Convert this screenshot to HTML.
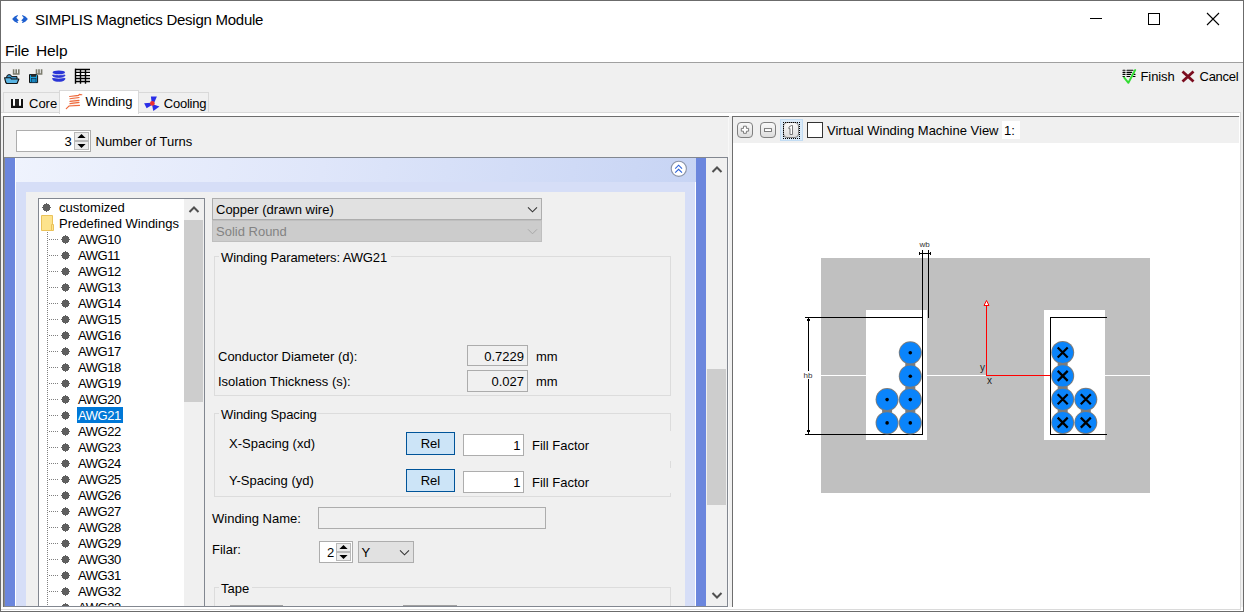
<!DOCTYPE html>
<html><head><meta charset="utf-8"><style>
html,body{margin:0;padding:0;}
body{width:1244px;height:612px;position:relative;overflow:hidden;background:#f0f0f0;font-family:"Liberation Sans",sans-serif;}
body>div,body>svg{position:absolute;}
.t{white-space:nowrap;}
</style></head><body>
<div style="left:0px;top:0px;width:1244px;height:62px;background:#fff"></div>
<div style="left:0px;top:62px;width:1244px;height:1px;background:#a0a0a0"></div>
<svg style="left:0px;top:0px" width="40" height="40" viewBox="0 0 40 40">
<path d="M17.6 15.1 L14.6 16.4 L12.1 18.9 L14.4 21.4 L17.3 22.9 L18.2 22.4 L17.1 21.3 L18.8 20.6 L16.3 17.7 L17.9 15.7 Z" fill="#1f60d0"/>
<path d="M22.4 15.1 L25.4 16.4 L27.9 18.9 L25.6 21.4 L22.7 22.9 L21.8 22.4 L22.9 21.3 L21.2 20.6 L23.7 17.7 L22.1 15.7 Z" fill="#1f60d0"/>
</svg>
<div class="t" style="left:35px;top:12.00px;font-size:15px;line-height:15px;color:#000;letter-spacing:-0.25px">SIMPLIS Magnetics Design Module</div>
<div style="left:1090px;top:18px;width:12px;height:1px;background:#000"></div>
<div style="left:1148px;top:13px;width:12px;height:12px;border:1px solid #000;box-sizing:border-box"></div>
<svg style="left:1206px;top:12px" width="14" height="14" viewBox="0 0 14 14"><path d="M1 1 L13 13 M13 1 L1 13" stroke="#000" stroke-width="1.1"/></svg>
<div class="t" style="left:5px;top:42.68px;font-size:15.5px;line-height:15.5px;color:#000;letter-spacing:-0.2px">File</div>
<div class="t" style="left:36px;top:42.68px;font-size:15.5px;line-height:15.5px;color:#000;letter-spacing:-0.1px">Help</div>
<svg style="left:0px;top:64px" width="48" height="24" viewBox="0 0 48 24">
<path d="M13.6 5.2 V10 H18.8 V5.2 M16.2 5.2 V10" fill="none" stroke="#7c7c6e" stroke-width="1.6"/>
<path d="M6.5 14 Q6.5 10.6 9 10.6 Q11.5 10.6 11.5 12.6 H17 V15.5 H6.5 Z" fill="#3d9ad0" stroke="#111" stroke-width="1"/>
<path d="M4.6 13.8 H10.6 L11.4 15 H18.9 L17.3 19 L16.8 19.5 H6.8 L5.8 18.5 Z" fill="#5ab4e2" stroke="#111" stroke-width="1.1" stroke-linejoin="round"/>
<path d="M36.5 5.2 V10 H41.6 V5.2 M39 5.2 V10" fill="none" stroke="#7c7c6e" stroke-width="1.6"/>
<path d="M29.5 10.6 H36.5 L37.6 11.7 V18.6 H29.5 Z" fill="#1da1dc" stroke="#111" stroke-width="1"/>
<rect x="31" y="10.6" width="5" height="2.2" fill="#2a2a2a"/>
<rect x="31.5" y="14.5" width="4.5" height="4" fill="#1a86c0" stroke="#0f3550" stroke-width="0.7"/>
</svg>
<svg style="left:48px;top:64px" width="20" height="24" viewBox="0 0 20 24">
<ellipse cx="10.8" cy="8.4" rx="6.2" ry="1.9" fill="#2a35d6"/>
<path d="M4.6 11 Q4.6 13.4 10.8 13.4 Q17 13.4 17 11 Q10.8 12.4 4.6 11 Z" fill="#2a35d6" stroke="#2a35d6" stroke-width="0.8"/>
<path d="M4.6 14.4 Q4.6 17.3 10.8 17.3 Q17 17.3 17 14.4 Q10.8 15.8 4.6 14.4 Z" fill="#2a35d6" stroke="#2a35d6" stroke-width="0.9"/>
</svg>
<svg style="left:74px;top:68px" width="17" height="17" viewBox="0 0 17 17">
<rect x="1.5" y="1.5" width="14.5" height="12" fill="#fff"/>
<path d="M1.5 0.7 V15.8 M6.5 1 V15.8 M11.5 1 V15.8" stroke="#000" stroke-width="1.4"/>
<path d="M1 1.5 H16 M1 4.4 H16 M1 7.6 H16 M1 10.5 H16 M1 13.5 H16" stroke="#000" stroke-width="1.4"/>
</svg>
<svg style="left:1118px;top:64px" width="24" height="24" viewBox="1118 64 24 24">
<path d="M1123 70.3 H1125 M1127 70.3 H1133 M1123 72.4 H1125 M1127 72.4 H1131.7 M1123 74.4 H1125 M1127 74.4 H1130.8 M1133.6 74.4 H1135 M1123 76.5 H1124.5 M1127 76.5 H1129.7 M1133 76.5 H1135" stroke="#000" stroke-width="1.1" stroke-linecap="round"/>
<path d="M1124.2 77.6 L1128.4 82.8 L1135.2 70" fill="none" stroke="#33dd33" stroke-width="1.9" stroke-linecap="round" stroke-linejoin="round"/>
</svg>
<div class="t" style="left:1140.5px;top:70.20px;font-size:13px;line-height:13px;color:#000;letter-spacing:-0.1px">Finish</div>
<svg style="left:1181px;top:70px" width="14" height="13" viewBox="0 0 14 13"><path d="M1.5 1.5 L12.5 11.5 M12.5 1.5 L1.5 11.5" stroke="#7b0c1f" stroke-width="2.8"/></svg>
<div class="t" style="left:1199.5px;top:70.20px;font-size:13px;line-height:13px;color:#000;letter-spacing:-0.25px">Cancel</div>
<div style="left:1px;top:112px;width:1240px;height:1px;background:#dadada"></div>
<div style="left:1px;top:113px;width:1240px;height:3px;background:#fff"></div>
<div style="left:3px;top:92px;width:57px;height:21px;background:#f0f0f0;border:1px solid #d9d9d9;box-sizing:border-box"></div>
<div style="left:138px;top:92px;width:71px;height:21px;background:#f0f0f0;border:1px solid #d9d9d9;box-sizing:border-box"></div>
<div style="left:59px;top:90px;width:80px;height:24px;background:#fff;border:1px solid #d9d9d9;border-bottom:none;box-sizing:border-box"></div>
<svg style="left:0px;top:92px" width="60" height="20" viewBox="0 92 60 20"><rect x="11" y="99" width="12" height="9" fill="#111"/><rect x="15" y="99" width="4" height="7" fill="#222"/><rect x="13" y="99" width="2" height="6.8" fill="#fff"/><rect x="19" y="99" width="2" height="6.8" fill="#fff"/></svg>
<div class="t" style="left:29px;top:97.00px;font-size:13px;line-height:13px;color:#000;">Core</div>
<svg style="left:60px;top:90px" width="26" height="22" viewBox="60 90 26 22" fill="none" stroke="#ee6a3c" stroke-width="1.15" stroke-linecap="round">
<path d="M66.3 108.6 L69 106 L79.5 105.4 M70 103.6 L79 102.4 M70 101.4 L79 100.4 M70 98.7 L79 97.5 M69.6 96.5 L78.5 95.4 L79.4 94.4 L81.8 94.7"/>
<path d="M69 106 L79 103 M70 103.6 L79 100.5 M70 101.4 L79 97.7 M70 98.7 L78.5 95.6" stroke-width="0.5" opacity="0.3"/>
</svg>
<div class="t" style="left:85.6px;top:94.90px;font-size:13px;line-height:13px;color:#000;">Winding</div>
<svg style="left:140px;top:92px" width="24" height="22" viewBox="140 92 24 22">
<path d="M151.6 102.2 L150.9 96.6 L156.9 96.4 L154.3 102.6 Z" fill="#2a2ee8"/>
<path d="M151 102.8 L144.1 103.3 L146.6 108.3 L151.5 105.2 Z" fill="#2a2ee8"/>
<path d="M153.6 104.4 L159.5 106.5 L153.3 110.9 L152.2 105.4 Z" fill="#2a2ee8"/>
<circle cx="152.3" cy="103.4" r="2.4" fill="#ec2f33"/>
</svg>
<div class="t" style="left:163.8px;top:97.20px;font-size:13px;line-height:13px;color:#000;letter-spacing:-0.25px">Cooling</div>
<div style="left:3px;top:116px;width:726px;height:1px;background:#6e6e6e"></div>
<div style="left:3px;top:116px;width:1px;height:491px;background:#6e6e6e"></div>
<div style="left:728px;top:117px;width:1px;height:490px;background:#f8f8f8"></div>
<div style="left:4px;top:607px;width:726px;height:1px;background:#fff"></div>
<div style="left:16px;top:130px;width:75px;height:22px;background:#fff;border:1px solid #adadad;box-sizing:border-box"></div>
<div style="left:74px;top:132px;width:15px;height:9px;background:#ececec;border:1px solid #b9b9b9;box-sizing:border-box"></div>
<div style="left:74px;top:141px;width:15px;height:9px;background:#ececec;border:1px solid #b9b9b9;box-sizing:border-box"></div>
<svg style="left:76px;top:133px" width="11" height="16" viewBox="0 0 11 16"><path d="M5.5 0.9 L9.6 5.1 H1.4 Z M1.4 10.9 H9.6 L5.5 15 Z" fill="#000"/></svg>
<div class="t" style="left:64.5px;top:134.70px;font-size:13px;line-height:13px;color:#000;">3</div>
<div class="t" style="left:95.5px;top:134.70px;font-size:13px;line-height:13px;color:#000;">Number of Turns</div>
<div style="left:4px;top:157px;width:724px;height:1px;background:#828790"></div>
<div style="left:727px;top:157px;width:1px;height:450px;background:#828790"></div>
<div style="left:4px;top:606px;width:724px;height:1px;background:#828790"></div>
<div style="left:4px;top:158px;width:1px;height:448px;background:#8a8a8a"></div>
<div style="left:5px;top:158px;width:10px;height:448px;background:#6b86dd"></div>
<div style="left:696px;top:158px;width:10px;height:448px;background:#6b86dd"></div>
<div style="left:16px;top:158px;width:680px;height:24px;background:linear-gradient(100deg,#eff3fd 0%,#dfe6fa 45%,#c7d4f4 100%)"></div>
<div style="left:15px;top:158px;width:1px;height:448px;background:#fff"></div>
<div style="left:695px;top:182px;width:1px;height:424px;background:#fff"></div>
<div style="left:16px;top:182px;width:679px;height:424px;background:#d6def7"></div>
<div style="left:26px;top:192px;width:659px;height:414px;background:#f0f0f0"></div>
<svg style="left:670px;top:160px" width="18" height="18" viewBox="0 0 18 18"><circle cx="8.8" cy="8.8" r="7.6" fill="#fff" stroke="#8a93a6" stroke-width="1.1"/><path d="M5.2 8.6 L8.6 5.2 L12 8.6 M5.2 12.7 L8.6 9.3 L12 12.7" fill="none" stroke="#2d62d8" stroke-width="1.1"/></svg>
<div style="left:706px;top:158px;width:21px;height:448px;background:#f0f0f0"></div>
<div style="left:707px;top:369px;width:19px;height:136px;background:#cdcdcd"></div>
<svg style="left:710.5px;top:165px" width="12" height="9" viewBox="0 0 12 9"><path d="M1.5 7 L6 2.5 L10.5 7" fill="none" stroke="#505050" stroke-width="2"/></svg>
<svg style="left:710.5px;top:591px" width="12" height="9" viewBox="0 0 12 9"><path d="M1.5 2 L6 6.5 L10.5 2" fill="none" stroke="#505050" stroke-width="2"/></svg>
<div style="left:38px;top:198px;width:167px;height:408px;background:#fff;border:1px solid #828790;border-bottom:none;box-sizing:border-box"></div>
<div style="left:184px;top:199px;width:20px;height:407px;background:#f0f0f0"></div>
<div style="left:184px;top:220px;width:19px;height:182px;background:#cdcdcd"></div>
<svg style="left:188px;top:205px" width="12" height="9" viewBox="0 0 12 9"><path d="M1.5 7 L6 2.5 L10.5 7" fill="none" stroke="#505050" stroke-width="2"/></svg>
<svg style="left:42px;top:203px" width="9" height="9" viewBox="0 0 9 9" shape-rendering="crispEdges" fill="#5f5f5f"><rect x="1" y="2" width="7" height="5"/><rect x="2" y="1" width="5" height="7"/><rect x="4" y="0" width="1" height="9"/><rect x="0" y="4" width="9" height="1"/></svg>
<div class="t" style="left:59px;top:200.50px;font-size:13px;line-height:13px;color:#000;">customized</div>
<svg style="left:41px;top:215px" width="14" height="17" viewBox="0 0 14 17"><path d="M0.5 0.5 H11.5 V9.5 H12.5 V15.5 H0.5 Z" fill="#fde38c" stroke="#eac25a" stroke-width="1"/><path d="M10.5 9.5 H12 M10.5 9.5 V15.5" stroke="#eac25a" stroke-width="1" fill="none"/></svg>
<div class="t" style="left:59px;top:216.50px;font-size:13px;line-height:13px;color:#000;">Predefined Windings</div>
<div style="left:47px;top:232px;width:1px;height:374px;background:repeating-linear-gradient(to bottom,#808080 0 1px,transparent 1px 2px)"></div>
<div style="left:49px;top:239px;width:10px;height:1px;background:repeating-linear-gradient(to right,#808080 0 1px,transparent 1px 2px)"></div>
<svg style="left:61px;top:235px" width="9" height="9" viewBox="0 0 9 9" shape-rendering="crispEdges" fill="#5f5f5f"><rect x="1" y="2" width="7" height="5"/><rect x="2" y="1" width="5" height="7"/><rect x="4" y="0" width="1" height="9"/><rect x="0" y="4" width="9" height="1"/></svg>
<div class="t" style="left:78px;top:232.50px;font-size:13px;line-height:13px;color:#000;letter-spacing:-0.45px">AWG10</div>
<div style="left:49px;top:255px;width:10px;height:1px;background:repeating-linear-gradient(to right,#808080 0 1px,transparent 1px 2px)"></div>
<svg style="left:61px;top:251px" width="9" height="9" viewBox="0 0 9 9" shape-rendering="crispEdges" fill="#5f5f5f"><rect x="1" y="2" width="7" height="5"/><rect x="2" y="1" width="5" height="7"/><rect x="4" y="0" width="1" height="9"/><rect x="0" y="4" width="9" height="1"/></svg>
<div class="t" style="left:78px;top:248.50px;font-size:13px;line-height:13px;color:#000;letter-spacing:-0.45px">AWG11</div>
<div style="left:49px;top:271px;width:10px;height:1px;background:repeating-linear-gradient(to right,#808080 0 1px,transparent 1px 2px)"></div>
<svg style="left:61px;top:267px" width="9" height="9" viewBox="0 0 9 9" shape-rendering="crispEdges" fill="#5f5f5f"><rect x="1" y="2" width="7" height="5"/><rect x="2" y="1" width="5" height="7"/><rect x="4" y="0" width="1" height="9"/><rect x="0" y="4" width="9" height="1"/></svg>
<div class="t" style="left:78px;top:264.50px;font-size:13px;line-height:13px;color:#000;letter-spacing:-0.45px">AWG12</div>
<div style="left:49px;top:287px;width:10px;height:1px;background:repeating-linear-gradient(to right,#808080 0 1px,transparent 1px 2px)"></div>
<svg style="left:61px;top:283px" width="9" height="9" viewBox="0 0 9 9" shape-rendering="crispEdges" fill="#5f5f5f"><rect x="1" y="2" width="7" height="5"/><rect x="2" y="1" width="5" height="7"/><rect x="4" y="0" width="1" height="9"/><rect x="0" y="4" width="9" height="1"/></svg>
<div class="t" style="left:78px;top:280.50px;font-size:13px;line-height:13px;color:#000;letter-spacing:-0.45px">AWG13</div>
<div style="left:49px;top:303px;width:10px;height:1px;background:repeating-linear-gradient(to right,#808080 0 1px,transparent 1px 2px)"></div>
<svg style="left:61px;top:299px" width="9" height="9" viewBox="0 0 9 9" shape-rendering="crispEdges" fill="#5f5f5f"><rect x="1" y="2" width="7" height="5"/><rect x="2" y="1" width="5" height="7"/><rect x="4" y="0" width="1" height="9"/><rect x="0" y="4" width="9" height="1"/></svg>
<div class="t" style="left:78px;top:296.50px;font-size:13px;line-height:13px;color:#000;letter-spacing:-0.45px">AWG14</div>
<div style="left:49px;top:319px;width:10px;height:1px;background:repeating-linear-gradient(to right,#808080 0 1px,transparent 1px 2px)"></div>
<svg style="left:61px;top:315px" width="9" height="9" viewBox="0 0 9 9" shape-rendering="crispEdges" fill="#5f5f5f"><rect x="1" y="2" width="7" height="5"/><rect x="2" y="1" width="5" height="7"/><rect x="4" y="0" width="1" height="9"/><rect x="0" y="4" width="9" height="1"/></svg>
<div class="t" style="left:78px;top:312.50px;font-size:13px;line-height:13px;color:#000;letter-spacing:-0.45px">AWG15</div>
<div style="left:49px;top:335px;width:10px;height:1px;background:repeating-linear-gradient(to right,#808080 0 1px,transparent 1px 2px)"></div>
<svg style="left:61px;top:331px" width="9" height="9" viewBox="0 0 9 9" shape-rendering="crispEdges" fill="#5f5f5f"><rect x="1" y="2" width="7" height="5"/><rect x="2" y="1" width="5" height="7"/><rect x="4" y="0" width="1" height="9"/><rect x="0" y="4" width="9" height="1"/></svg>
<div class="t" style="left:78px;top:328.50px;font-size:13px;line-height:13px;color:#000;letter-spacing:-0.45px">AWG16</div>
<div style="left:49px;top:351px;width:10px;height:1px;background:repeating-linear-gradient(to right,#808080 0 1px,transparent 1px 2px)"></div>
<svg style="left:61px;top:347px" width="9" height="9" viewBox="0 0 9 9" shape-rendering="crispEdges" fill="#5f5f5f"><rect x="1" y="2" width="7" height="5"/><rect x="2" y="1" width="5" height="7"/><rect x="4" y="0" width="1" height="9"/><rect x="0" y="4" width="9" height="1"/></svg>
<div class="t" style="left:78px;top:344.50px;font-size:13px;line-height:13px;color:#000;letter-spacing:-0.45px">AWG17</div>
<div style="left:49px;top:367px;width:10px;height:1px;background:repeating-linear-gradient(to right,#808080 0 1px,transparent 1px 2px)"></div>
<svg style="left:61px;top:363px" width="9" height="9" viewBox="0 0 9 9" shape-rendering="crispEdges" fill="#5f5f5f"><rect x="1" y="2" width="7" height="5"/><rect x="2" y="1" width="5" height="7"/><rect x="4" y="0" width="1" height="9"/><rect x="0" y="4" width="9" height="1"/></svg>
<div class="t" style="left:78px;top:360.50px;font-size:13px;line-height:13px;color:#000;letter-spacing:-0.45px">AWG18</div>
<div style="left:49px;top:383px;width:10px;height:1px;background:repeating-linear-gradient(to right,#808080 0 1px,transparent 1px 2px)"></div>
<svg style="left:61px;top:379px" width="9" height="9" viewBox="0 0 9 9" shape-rendering="crispEdges" fill="#5f5f5f"><rect x="1" y="2" width="7" height="5"/><rect x="2" y="1" width="5" height="7"/><rect x="4" y="0" width="1" height="9"/><rect x="0" y="4" width="9" height="1"/></svg>
<div class="t" style="left:78px;top:376.50px;font-size:13px;line-height:13px;color:#000;letter-spacing:-0.45px">AWG19</div>
<div style="left:49px;top:399px;width:10px;height:1px;background:repeating-linear-gradient(to right,#808080 0 1px,transparent 1px 2px)"></div>
<svg style="left:61px;top:395px" width="9" height="9" viewBox="0 0 9 9" shape-rendering="crispEdges" fill="#5f5f5f"><rect x="1" y="2" width="7" height="5"/><rect x="2" y="1" width="5" height="7"/><rect x="4" y="0" width="1" height="9"/><rect x="0" y="4" width="9" height="1"/></svg>
<div class="t" style="left:78px;top:392.50px;font-size:13px;line-height:13px;color:#000;letter-spacing:-0.45px">AWG20</div>
<div style="left:49px;top:415px;width:10px;height:1px;background:repeating-linear-gradient(to right,#808080 0 1px,transparent 1px 2px)"></div>
<svg style="left:61px;top:411px" width="9" height="9" viewBox="0 0 9 9" shape-rendering="crispEdges" fill="#5f5f5f"><rect x="1" y="2" width="7" height="5"/><rect x="2" y="1" width="5" height="7"/><rect x="4" y="0" width="1" height="9"/><rect x="0" y="4" width="9" height="1"/></svg>
<div style="left:77px;top:407px;width:46px;height:16px;background:#0078d7"></div>
<div class="t" style="left:78px;top:408.50px;font-size:13px;line-height:13px;color:#fff;letter-spacing:-0.45px">AWG21</div>
<div style="left:49px;top:431px;width:10px;height:1px;background:repeating-linear-gradient(to right,#808080 0 1px,transparent 1px 2px)"></div>
<svg style="left:61px;top:427px" width="9" height="9" viewBox="0 0 9 9" shape-rendering="crispEdges" fill="#5f5f5f"><rect x="1" y="2" width="7" height="5"/><rect x="2" y="1" width="5" height="7"/><rect x="4" y="0" width="1" height="9"/><rect x="0" y="4" width="9" height="1"/></svg>
<div class="t" style="left:78px;top:424.50px;font-size:13px;line-height:13px;color:#000;letter-spacing:-0.45px">AWG22</div>
<div style="left:49px;top:447px;width:10px;height:1px;background:repeating-linear-gradient(to right,#808080 0 1px,transparent 1px 2px)"></div>
<svg style="left:61px;top:443px" width="9" height="9" viewBox="0 0 9 9" shape-rendering="crispEdges" fill="#5f5f5f"><rect x="1" y="2" width="7" height="5"/><rect x="2" y="1" width="5" height="7"/><rect x="4" y="0" width="1" height="9"/><rect x="0" y="4" width="9" height="1"/></svg>
<div class="t" style="left:78px;top:440.50px;font-size:13px;line-height:13px;color:#000;letter-spacing:-0.45px">AWG23</div>
<div style="left:49px;top:463px;width:10px;height:1px;background:repeating-linear-gradient(to right,#808080 0 1px,transparent 1px 2px)"></div>
<svg style="left:61px;top:459px" width="9" height="9" viewBox="0 0 9 9" shape-rendering="crispEdges" fill="#5f5f5f"><rect x="1" y="2" width="7" height="5"/><rect x="2" y="1" width="5" height="7"/><rect x="4" y="0" width="1" height="9"/><rect x="0" y="4" width="9" height="1"/></svg>
<div class="t" style="left:78px;top:456.50px;font-size:13px;line-height:13px;color:#000;letter-spacing:-0.45px">AWG24</div>
<div style="left:49px;top:479px;width:10px;height:1px;background:repeating-linear-gradient(to right,#808080 0 1px,transparent 1px 2px)"></div>
<svg style="left:61px;top:475px" width="9" height="9" viewBox="0 0 9 9" shape-rendering="crispEdges" fill="#5f5f5f"><rect x="1" y="2" width="7" height="5"/><rect x="2" y="1" width="5" height="7"/><rect x="4" y="0" width="1" height="9"/><rect x="0" y="4" width="9" height="1"/></svg>
<div class="t" style="left:78px;top:472.50px;font-size:13px;line-height:13px;color:#000;letter-spacing:-0.45px">AWG25</div>
<div style="left:49px;top:495px;width:10px;height:1px;background:repeating-linear-gradient(to right,#808080 0 1px,transparent 1px 2px)"></div>
<svg style="left:61px;top:491px" width="9" height="9" viewBox="0 0 9 9" shape-rendering="crispEdges" fill="#5f5f5f"><rect x="1" y="2" width="7" height="5"/><rect x="2" y="1" width="5" height="7"/><rect x="4" y="0" width="1" height="9"/><rect x="0" y="4" width="9" height="1"/></svg>
<div class="t" style="left:78px;top:488.50px;font-size:13px;line-height:13px;color:#000;letter-spacing:-0.45px">AWG26</div>
<div style="left:49px;top:511px;width:10px;height:1px;background:repeating-linear-gradient(to right,#808080 0 1px,transparent 1px 2px)"></div>
<svg style="left:61px;top:507px" width="9" height="9" viewBox="0 0 9 9" shape-rendering="crispEdges" fill="#5f5f5f"><rect x="1" y="2" width="7" height="5"/><rect x="2" y="1" width="5" height="7"/><rect x="4" y="0" width="1" height="9"/><rect x="0" y="4" width="9" height="1"/></svg>
<div class="t" style="left:78px;top:504.50px;font-size:13px;line-height:13px;color:#000;letter-spacing:-0.45px">AWG27</div>
<div style="left:49px;top:527px;width:10px;height:1px;background:repeating-linear-gradient(to right,#808080 0 1px,transparent 1px 2px)"></div>
<svg style="left:61px;top:523px" width="9" height="9" viewBox="0 0 9 9" shape-rendering="crispEdges" fill="#5f5f5f"><rect x="1" y="2" width="7" height="5"/><rect x="2" y="1" width="5" height="7"/><rect x="4" y="0" width="1" height="9"/><rect x="0" y="4" width="9" height="1"/></svg>
<div class="t" style="left:78px;top:520.50px;font-size:13px;line-height:13px;color:#000;letter-spacing:-0.45px">AWG28</div>
<div style="left:49px;top:543px;width:10px;height:1px;background:repeating-linear-gradient(to right,#808080 0 1px,transparent 1px 2px)"></div>
<svg style="left:61px;top:539px" width="9" height="9" viewBox="0 0 9 9" shape-rendering="crispEdges" fill="#5f5f5f"><rect x="1" y="2" width="7" height="5"/><rect x="2" y="1" width="5" height="7"/><rect x="4" y="0" width="1" height="9"/><rect x="0" y="4" width="9" height="1"/></svg>
<div class="t" style="left:78px;top:536.50px;font-size:13px;line-height:13px;color:#000;letter-spacing:-0.45px">AWG29</div>
<div style="left:49px;top:559px;width:10px;height:1px;background:repeating-linear-gradient(to right,#808080 0 1px,transparent 1px 2px)"></div>
<svg style="left:61px;top:555px" width="9" height="9" viewBox="0 0 9 9" shape-rendering="crispEdges" fill="#5f5f5f"><rect x="1" y="2" width="7" height="5"/><rect x="2" y="1" width="5" height="7"/><rect x="4" y="0" width="1" height="9"/><rect x="0" y="4" width="9" height="1"/></svg>
<div class="t" style="left:78px;top:552.50px;font-size:13px;line-height:13px;color:#000;letter-spacing:-0.45px">AWG30</div>
<div style="left:49px;top:575px;width:10px;height:1px;background:repeating-linear-gradient(to right,#808080 0 1px,transparent 1px 2px)"></div>
<svg style="left:61px;top:571px" width="9" height="9" viewBox="0 0 9 9" shape-rendering="crispEdges" fill="#5f5f5f"><rect x="1" y="2" width="7" height="5"/><rect x="2" y="1" width="5" height="7"/><rect x="4" y="0" width="1" height="9"/><rect x="0" y="4" width="9" height="1"/></svg>
<div class="t" style="left:78px;top:568.50px;font-size:13px;line-height:13px;color:#000;letter-spacing:-0.45px">AWG31</div>
<div style="left:49px;top:591px;width:10px;height:1px;background:repeating-linear-gradient(to right,#808080 0 1px,transparent 1px 2px)"></div>
<svg style="left:61px;top:587px" width="9" height="9" viewBox="0 0 9 9" shape-rendering="crispEdges" fill="#5f5f5f"><rect x="1" y="2" width="7" height="5"/><rect x="2" y="1" width="5" height="7"/><rect x="4" y="0" width="1" height="9"/><rect x="0" y="4" width="9" height="1"/></svg>
<div class="t" style="left:78px;top:584.50px;font-size:13px;line-height:13px;color:#000;letter-spacing:-0.45px">AWG32</div>
<div style="left:49px;top:607px;width:10px;height:1px;background:repeating-linear-gradient(to right,#808080 0 1px,transparent 1px 2px)"></div>
<svg style="left:61px;top:603px" width="9" height="9" viewBox="0 0 9 9" shape-rendering="crispEdges" fill="#5f5f5f"><rect x="1" y="2" width="7" height="5"/><rect x="2" y="1" width="5" height="7"/><rect x="4" y="0" width="1" height="9"/><rect x="0" y="4" width="9" height="1"/></svg>
<div class="t" style="left:78px;top:600.50px;font-size:13px;line-height:13px;color:#000;letter-spacing:-0.45px">AWG33</div>
<div style="left:212px;top:198px;width:330px;height:22px;background:#e1e1e1;border:1px solid #adadad;box-sizing:border-box"></div>
<div class="t" style="left:216px;top:202.50px;font-size:13px;line-height:13px;color:#000;">Copper (drawn wire)</div>
<svg style="left:526px;top:205px" width="13" height="9" viewBox="0 0 13 9"><path d="M2 2.3 L6.5 6.8 L11 2.3" fill="none" stroke="#333" stroke-width="1.05"/></svg>
<div style="left:212px;top:220px;width:330px;height:22px;background:#cccccc;border:1px solid #bfbfbf;box-sizing:border-box"></div>
<div class="t" style="left:216px;top:224.70px;font-size:13px;line-height:13px;color:#838383;">Solid Round</div>
<svg style="left:526px;top:227px" width="13" height="9" viewBox="0 0 13 9"><path d="M2 2.3 L6.5 6.8 L11 2.3" fill="none" stroke="#a8a8a8" stroke-width="1"/></svg>
<div style="left:214px;top:256px;width:457px;height:140px;border:1px solid #dcdcdc;box-sizing:border-box"></div>
<div style="left:219px;top:250px;width:172px;height:12px;background:#f0f0f0"></div>
<div class="t" style="left:221px;top:251.00px;font-size:13px;line-height:13px;color:#000;letter-spacing:-0.13px">Winding Parameters: AWG21</div>
<div class="t" style="left:218px;top:349.80px;font-size:13px;line-height:13px;color:#000;">Conductor Diameter (d):</div>
<div class="t" style="left:218px;top:374.60px;font-size:13px;line-height:13px;color:#000;">Isolation Thickness (s):</div>
<div style="left:467px;top:345px;width:61px;height:21px;background:#f0f0f0;border:1px solid #acacac;box-sizing:border-box"></div>
<div style="left:467px;top:370px;width:61px;height:22px;background:#f0f0f0;border:1px solid #acacac;box-sizing:border-box"></div>
<div class="t" style="right:720px;top:349.60px;font-size:13px;line-height:13px;color:#000;">0.7229</div>
<div class="t" style="right:720px;top:374.60px;font-size:13px;line-height:13px;color:#000;">0.027</div>
<div class="t" style="left:536px;top:349.60px;font-size:13px;line-height:13px;color:#000;">mm</div>
<div class="t" style="left:536px;top:374.60px;font-size:13px;line-height:13px;color:#000;">mm</div>
<div style="left:214px;top:413px;width:457px;height:84px;border:1px solid #dcdcdc;box-sizing:border-box"></div>
<div style="left:219px;top:407px;width:98px;height:12px;background:#f0f0f0"></div>
<div class="t" style="left:221px;top:408.20px;font-size:13px;line-height:13px;color:#000;letter-spacing:-0.13px">Winding Spacing</div>
<div style="left:670px;top:431px;width:1px;height:30px;background:#f0f0f0"></div>
<div style="left:670px;top:468px;width:1px;height:25px;background:#f0f0f0"></div>
<div class="t" style="left:229px;top:436.50px;font-size:13px;line-height:13px;color:#000;">X-Spacing (xd)</div>
<div class="t" style="left:229px;top:473.80px;font-size:13px;line-height:13px;color:#000;">Y-Spacing (yd)</div>
<div style="left:406px;top:432px;width:49px;height:23px;background:#cce4f7;border:1px solid #005499;box-sizing:border-box"></div>
<div style="left:406px;top:469px;width:49px;height:23px;background:#cce4f7;border:1px solid #005499;box-sizing:border-box"></div>
<div class="t" style="left:330.5px;width:200px;text-align:center;top:436.50px;font-size:13px;line-height:13px;color:#000;">Rel</div>
<div class="t" style="left:330.5px;width:200px;text-align:center;top:473.80px;font-size:13px;line-height:13px;color:#000;">Rel</div>
<div style="left:463px;top:434px;width:61px;height:22px;background:#fff;border:1px solid #adadad;box-sizing:border-box"></div>
<div style="left:463px;top:471px;width:61px;height:22px;background:#fff;border:1px solid #adadad;box-sizing:border-box"></div>
<div class="t" style="right:723.5px;top:439.00px;font-size:13px;line-height:13px;color:#000;">1</div>
<div class="t" style="right:723.5px;top:476.00px;font-size:13px;line-height:13px;color:#000;">1</div>
<div class="t" style="left:532px;top:439.00px;font-size:13px;line-height:13px;color:#000;">Fill Factor</div>
<div class="t" style="left:532px;top:476.00px;font-size:13px;line-height:13px;color:#000;">Fill Factor</div>
<div class="t" style="left:212px;top:511.60px;font-size:13px;line-height:13px;color:#000;">Winding Name:</div>
<div style="left:318px;top:507px;width:228px;height:22px;background:#f0f0f0;border:1px solid #adadad;box-sizing:border-box"></div>
<div class="t" style="left:212px;top:543.40px;font-size:13px;line-height:13px;color:#000;">Filar:</div>
<div style="left:319px;top:541px;width:34px;height:22px;background:#fff;border:1px solid #adadad;box-sizing:border-box"></div>
<div style="left:336px;top:543px;width:15px;height:9px;background:#ececec;border:1px solid #b9b9b9;box-sizing:border-box"></div>
<div style="left:336px;top:552px;width:15px;height:9px;background:#ececec;border:1px solid #b9b9b9;box-sizing:border-box"></div>
<svg style="left:338px;top:544px" width="11" height="16" viewBox="0 0 11 16"><path d="M5.5 0.9 L9.6 5.1 H1.4 Z M1.4 10.9 H9.6 L5.5 15 Z" fill="#000"/></svg>
<div class="t" style="left:327px;top:545.50px;font-size:13px;line-height:13px;color:#000;">2</div>
<div style="left:358px;top:541px;width:56px;height:22px;background:#e1e1e1;border:1px solid #adadad;box-sizing:border-box"></div>
<div class="t" style="left:361.5px;top:545.50px;font-size:13px;line-height:13px;color:#000;">Y</div>
<svg style="left:398px;top:548px" width="13" height="9" viewBox="0 0 13 9"><path d="M2 2.3 L6.5 6.8 L11 2.3" fill="none" stroke="#333" stroke-width="1.05"/></svg>
<div style="left:214px;top:587px;width:457px;height:19px;border:1px solid #dcdcdc;border-bottom:none;box-sizing:border-box"></div>
<div style="left:219px;top:581px;width:33px;height:12px;background:#f0f0f0"></div>
<div class="t" style="left:221px;top:581.90px;font-size:13px;line-height:13px;color:#000;">Tape</div>
<div style="left:230px;top:605px;width:53px;height:1px;background:#a0a0a0"></div>
<div style="left:403px;top:605px;width:54px;height:1px;background:#a0a0a0"></div>
<div style="left:4px;top:606px;width:724px;height:1px;background:#828790"></div>
<div style="left:732px;top:116px;width:507px;height:1px;background:#6e6e6e"></div>
<div style="left:732px;top:116px;width:1px;height:491px;background:#6e6e6e"></div>
<div style="left:1239px;top:117px;width:1px;height:490px;background:#fff"></div>
<div style="left:733px;top:607px;width:507px;height:1px;background:#fff"></div>
<div style="left:733px;top:117px;width:506px;height:26px;background:#f0f0f0"></div>
<div style="left:733px;top:143px;width:506px;height:464px;background:#fff"></div>
<svg style="left:737px;top:122px" width="17" height="17" viewBox="0 0 17 17"><defs><linearGradient id="g1" x1="0" y1="0" x2="0" y2="1"><stop offset="0" stop-color="#fafafa"/><stop offset="1" stop-color="#dcdcdc"/></linearGradient></defs><rect x="0.5" y="0.5" width="15" height="15" rx="3.5" fill="url(#g1)" stroke="#7f7f7f" stroke-width="1"/><path d="M6.5 4.2 H9.4 V6.4 H11.6 V9.2 H9.4 V11.3 H6.5 V9.2 H4.3 V6.4 H6.5 Z" fill="#fff" stroke="#707070" stroke-width="0.9"/></svg>
<svg style="left:760px;top:122px" width="17" height="17" viewBox="0 0 17 17"><defs><linearGradient id="g2" x1="0" y1="0" x2="0" y2="1"><stop offset="0" stop-color="#fafafa"/><stop offset="1" stop-color="#dcdcdc"/></linearGradient></defs><rect x="0.5" y="0.5" width="15" height="15" rx="3.5" fill="url(#g2)" stroke="#7f7f7f" stroke-width="1"/><rect x="4.5" y="6.6" width="7" height="2.9" fill="#fff" stroke="#707070" stroke-width="0.9"/></svg>
<div style="left:780px;top:119px;width:23px;height:22px;background:#d9eaf9;border:1px solid #c2dcf3;box-sizing:border-box"></div>
<svg style="left:783px;top:122px" width="17" height="17" viewBox="0 0 17 17"><defs><linearGradient id="g3" x1="0" y1="0" x2="0" y2="1"><stop offset="0" stop-color="#fafafa"/><stop offset="1" stop-color="#dcdcdc"/></linearGradient></defs><rect x="0.5" y="0.5" width="15" height="15" rx="3.5" fill="url(#g3)" stroke="#7f7f7f" stroke-width="1"/><path d="M6 5 L8.5 3.5 H9.5 V12.5 H7 V6.5 L6 7 Z" fill="#fff" stroke="#6a6a6a" stroke-width="0.9"/></svg>
<div style="left:783px;top:122px;width:17px;height:17px;border:1px dotted #000;box-sizing:border-box"></div>
<div style="left:807px;top:122px;width:16px;height:16px;background:#fff;border:1px solid #333;box-sizing:border-box"></div>
<div class="t" style="left:827px;top:123.90px;font-size:13px;line-height:13px;color:#000;">Virtual Winding Machine View</div>
<div style="left:1002px;top:121px;width:18px;height:18px;background:#fff"></div>
<div class="t" style="left:1004px;top:123.90px;font-size:13px;line-height:13px;color:#000;">1:</div>
<svg style="left:733px;top:143px" width="506" height="464" viewBox="733 143 506 464" shape-rendering="crispEdges">
<rect x="821" y="258" width="329" height="235" fill="#c0c0c0"/>
<rect x="821" y="375" width="329" height="1" fill="#fff"/>
<rect x="866" y="310" width="61" height="130" fill="#fff"/>
<rect x="1044" y="310" width="61" height="130" fill="#fff"/>
<rect x="805" y="317" width="118" height="1" fill="#000"/>
<rect x="805" y="434" width="118" height="1" fill="#000"/>
<rect x="922" y="250" width="1" height="185" fill="#000"/>
<rect x="928" y="250" width="1" height="68" fill="#000"/>
<rect x="808" y="318" width="1" height="53" fill="#000"/>
<rect x="808" y="379" width="1" height="55" fill="#000"/>
<rect x="807" y="319" width="3" height="2" fill="#000"/>
<rect x="807" y="430" width="3" height="2" fill="#000"/>
<rect x="919" y="253" width="12" height="1" fill="#000"/>
<rect x="919" y="252" width="1" height="3" fill="#000"/>
<rect x="930" y="252" width="1" height="3" fill="#000"/>
<rect x="1050" y="317" width="1" height="118" fill="#000"/>
<rect x="1050" y="317" width="57" height="1" fill="#000"/>
<rect x="1050" y="434" width="57" height="1" fill="#000"/>
<rect x="986" y="302" width="1" height="74" fill="#f00"/>
<rect x="986" y="375" width="64" height="1" fill="#f00"/>
</svg>
<svg style="left:980px;top:296px" width="14" height="14" viewBox="0 0 14 14"><path d="M6.5 4.5 L9 9.5 H4 Z" fill="#fff" stroke="#f00" stroke-width="1"/></svg>
<div class="t" style="left:919.5px;top:240.73px;font-size:8px;line-height:8px;color:#333;">wb</div>
<div class="t" style="left:803.5px;top:372.23px;font-size:8px;line-height:8px;color:#333;">hb</div>
<div class="t" style="left:980px;top:362.54px;font-size:10px;line-height:10px;color:#222;">y</div>
<div class="t" style="left:987px;top:376.04px;font-size:10px;line-height:10px;color:#222;">x</div>
<svg style="left:733px;top:143px" width="506" height="464" viewBox="733 143 506 464"><rect x="905.3" y="363.0" width="10" height="3" fill="#7c7c7c"/><rect x="905.3" y="386.4" width="10" height="3" fill="#7c7c7c"/><rect x="905.3" y="409.8" width="10" height="3" fill="#7c7c7c"/><rect x="882.1" y="409.8" width="10" height="3" fill="#7c7c7c"/><rect x="1057.7" y="362.7" width="10" height="3" fill="#7c7c7c"/><rect x="1057.7" y="386.09999999999997" width="10" height="3" fill="#7c7c7c"/><rect x="1057.7" y="409.5" width="10" height="3" fill="#7c7c7c"/><rect x="1080.8" y="409.5" width="10" height="3" fill="#7c7c7c"/><circle cx="910.3" cy="352.8" r="11.5" fill="#7c7c7c"/><circle cx="910.3" cy="352.8" r="10.6" fill="#0a84fb"/><circle cx="910.3" cy="352.8" r="1.8" fill="#000"/><circle cx="910.3" cy="376.2" r="11.5" fill="#7c7c7c"/><circle cx="910.3" cy="376.2" r="10.6" fill="#0a84fb"/><circle cx="910.3" cy="376.2" r="1.8" fill="#000"/><circle cx="910.3" cy="399.6" r="11.5" fill="#7c7c7c"/><circle cx="910.3" cy="399.6" r="10.6" fill="#0a84fb"/><circle cx="910.3" cy="399.6" r="1.8" fill="#000"/><circle cx="910.3" cy="422.9" r="11.5" fill="#7c7c7c"/><circle cx="910.3" cy="422.9" r="10.6" fill="#0a84fb"/><circle cx="910.3" cy="422.9" r="1.8" fill="#000"/><circle cx="887.1" cy="399.6" r="11.5" fill="#7c7c7c"/><circle cx="887.1" cy="399.6" r="10.6" fill="#0a84fb"/><circle cx="887.1" cy="399.6" r="1.8" fill="#000"/><circle cx="887.1" cy="422.9" r="11.5" fill="#7c7c7c"/><circle cx="887.1" cy="422.9" r="10.6" fill="#0a84fb"/><circle cx="887.1" cy="422.9" r="1.8" fill="#000"/><circle cx="1062.7" cy="352.5" r="11.5" fill="#7c7c7c"/><circle cx="1062.7" cy="352.5" r="10.6" fill="#0a84fb"/><path d="M1057.7 347.5 L1067.7 357.5 M1067.7 347.5 L1057.7 357.5" stroke="#000" stroke-width="2.2"/><circle cx="1062.7" cy="375.9" r="11.5" fill="#7c7c7c"/><circle cx="1062.7" cy="375.9" r="10.6" fill="#0a84fb"/><path d="M1057.7 370.9 L1067.7 380.9 M1067.7 370.9 L1057.7 380.9" stroke="#000" stroke-width="2.2"/><circle cx="1062.7" cy="399.3" r="11.5" fill="#7c7c7c"/><circle cx="1062.7" cy="399.3" r="10.6" fill="#0a84fb"/><path d="M1057.7 394.3 L1067.7 404.3 M1067.7 394.3 L1057.7 404.3" stroke="#000" stroke-width="2.2"/><circle cx="1062.7" cy="422.6" r="11.5" fill="#7c7c7c"/><circle cx="1062.7" cy="422.6" r="10.6" fill="#0a84fb"/><path d="M1057.7 417.6 L1067.7 427.6 M1067.7 417.6 L1057.7 427.6" stroke="#000" stroke-width="2.2"/><circle cx="1085.8" cy="399.3" r="11.5" fill="#7c7c7c"/><circle cx="1085.8" cy="399.3" r="10.6" fill="#0a84fb"/><path d="M1080.8 394.3 L1090.8 404.3 M1090.8 394.3 L1080.8 404.3" stroke="#000" stroke-width="2.2"/><circle cx="1085.8" cy="422.6" r="11.5" fill="#7c7c7c"/><circle cx="1085.8" cy="422.6" r="10.6" fill="#0a84fb"/><path d="M1080.8 417.6 L1090.8 427.6 M1090.8 417.6 L1080.8 427.6" stroke="#000" stroke-width="2.2"/></svg>
<div style="left:1px;top:607px;width:1242px;height:4px;background:#fff"></div>
<div style="left:4px;top:606px;width:724px;height:1px;background:#828790"></div>
<div style="left:733px;top:607px;width:507px;height:1px;background:#fff"></div>
<div style="left:1240px;top:112px;width:1px;height:498px;background:#dadada"></div>
<div style="left:1px;top:609px;width:1240px;height:1px;background:#dadada"></div>
<div style="left:0px;top:0px;width:1244px;height:1px;background:#6b6b6b"></div>
<div style="left:0px;top:0px;width:1px;height:612px;background:#6b6b6b"></div>
<div style="left:1243px;top:0px;width:1px;height:612px;background:#6b6b6b"></div>
<div style="left:0px;top:611px;width:1244px;height:1px;background:#6b6b6b"></div>
</body></html>
